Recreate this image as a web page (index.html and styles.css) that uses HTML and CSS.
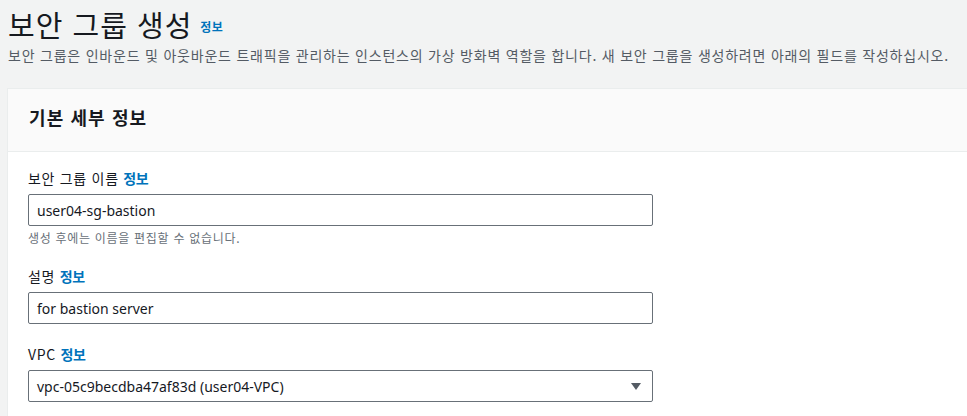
FILE: index.html
```html
<!DOCTYPE html>
<html lang="ko">
<head>
<meta charset="utf-8">
<link rel="stylesheet" href="styles.css">
</head>
<body>
<main class="page">
  <header class="page-head">
    <h1 class="title"><span>보안 그룹 생성</span><a class="info info-title">정보</a></h1>
    <p class="desc">보안 그룹은 인바운드 및 아웃바운드 트래픽을 관리하는 인스턴스의 가상 방화벽 역할을 합니다. 새 보안 그룹을 생성하려면 아래의 필드를 작성하십시오.</p>
  </header>
  <section class="card">
    <div class="card-head"><h2 class="card-title">기본 세부 정보</h2></div>
    <div class="card-body">
      <div class="field">
        <label class="label">보안 그룹 이름 <a class="info">정보</a></label>
        <div class="input">user04-sg-bastion</div>
        <div class="hint">생성 후에는 이름을 편집할 수 없습니다.</div>
      </div>
      <div class="field">
        <label class="label">설명 <a class="info">정보</a></label>
        <div class="input">for bastion server</div>
      </div>
      <div class="field">
        <label class="label">VPC <a class="info">정보</a></label>
        <div class="input select"><span>vpc-05c9becdba47af83d (user04-VPC)</span><span class="caret"></span></div>
      </div>
    </div>
  </section>
</main>
</body>
</html>
```
FILE: styles.css
```css
html, body {
  margin: 0;
  padding: 0;
  background: #f2f3f3;
  overflow: hidden;
}
body {
  font-family: "Noto Sans", "Noto Sans CJK KR", sans-serif;
  color: #16191f;
  font-size: 14px;
}
.page {
  padding: 6px 0 0 7px;
}
.page-head {
  padding-left: 1px;
}
.title {
  margin: 0;
  height: 36px;
  display: flex;
  align-items: flex-end;
  gap: 8px;
  font-family: "Noto Sans CJK KR", sans-serif;
  font-size: 29px;
  font-weight: 400;
  line-height: 36px;
  letter-spacing: 1px;
  color: #16191f;
}
.info {
  color: #0073bb;
  font-weight: 700;
  font-size: 14px;
  line-height: 20px;
  font-family: "Noto Sans CJK KR", sans-serif;
}
.info-title {
  font-size: 12px;
  line-height: 16px;
  letter-spacing: 0.3px;
  margin-bottom: 7px;
}
.desc {
  margin: 3px 0 0;
  height: 20px;
  font-family: "Noto Sans CJK KR", sans-serif;
  font-size: 14px;
  line-height: 20px;
  letter-spacing: 0.78px;
  white-space: nowrap;
  color: #545b64;
}
.card {
  margin-top: 23px;
  margin-right: -30px;
  border: 1px solid #eaeded;
  background: #fff;
}
.card-head {
  background: #fafafa;
  border-bottom: 1px solid #eaeded;
  padding: 16px 21px 22px;
}
.card-title {
  margin: 0;
  font-family: "Noto Sans CJK KR", sans-serif;
  font-size: 18px;
  font-weight: 700;
  line-height: 24px;
  letter-spacing: 1.1px;
}
.card-body {
  padding: 16px 20px 20px;
  display: flex;
  flex-direction: column;
  gap: 20px;
}
.field {
  display: flex;
  flex-direction: column;
}
.label {
  font-family: "Noto Sans CJK KR", sans-serif;
  font-size: 14px;
  line-height: 20px;
  height: 20px;
  letter-spacing: 0.7px;
  margin-bottom: 6px;
  color: #16191f;
}
.label .info {
  letter-spacing: -0.5px;
  font-weight: 600;
}
.input {
  box-sizing: border-box;
  width: 625px;
  height: 32px;
  border: 1px solid #687078;
  border-radius: 2px;
  padding: 0 11px 0 8px;
  display: flex;
  align-items: center;
  font-size: 14px;
  color: #16191f;
  background: #fff;
}
.select {
  justify-content: space-between;
}
.caret {
  width: 0;
  height: 0;
  border-left: 5px solid transparent;
  border-right: 5px solid transparent;
  border-top: 7px solid #545b64;
}
.hint {
  margin-top: 4px;
  font-family: "Noto Sans CJK KR", sans-serif;
  font-size: 12px;
  line-height: 16px;
  letter-spacing: 0.7px;
  color: #687078;
}
```
